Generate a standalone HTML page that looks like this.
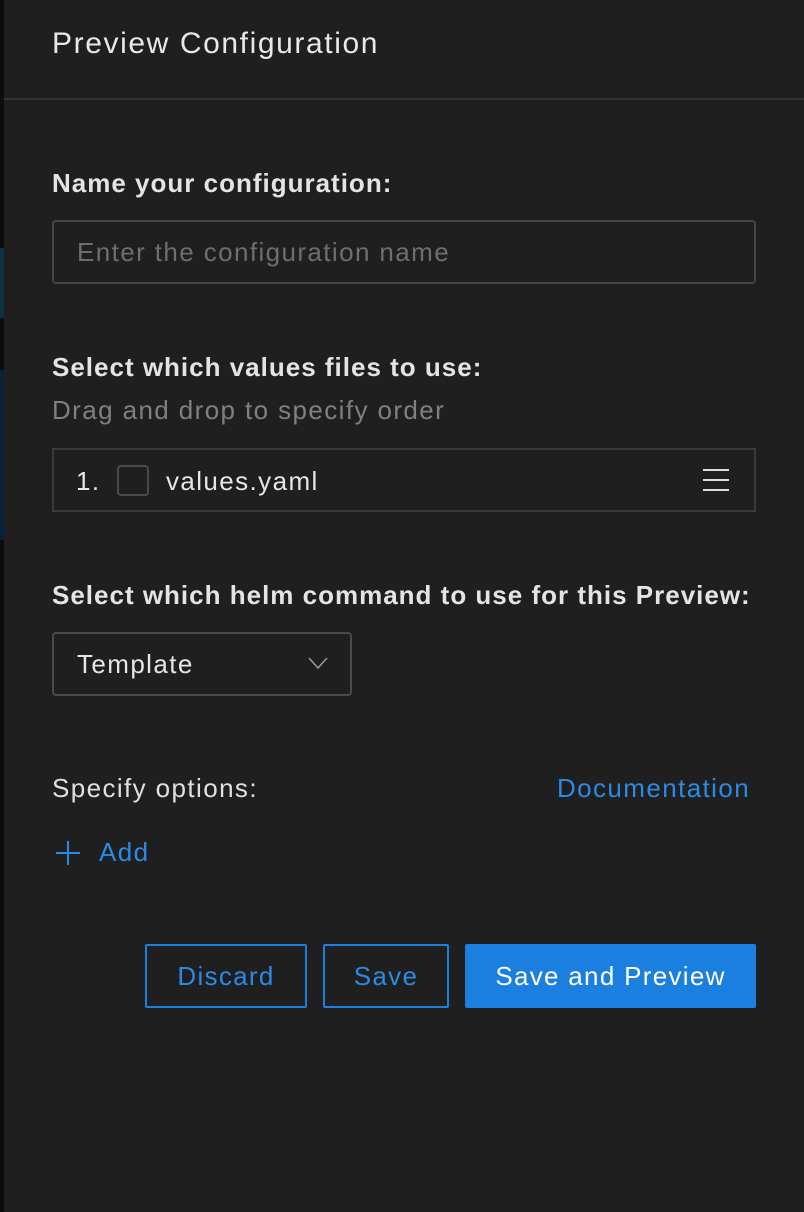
<!DOCTYPE html>
<html><head><meta charset="utf-8"><style>
*{margin:0;padding:0;box-sizing:border-box}
body{width:804px;height:1212px;background:#1f1f1f;font-family:"Liberation Sans",sans-serif;color:#e6e6e6;position:relative;overflow:hidden}
.strip{position:absolute;left:0;top:0;width:4px;height:1212px;background:#0d0d0d}
.a{position:absolute;white-space:nowrap;font-size:26px;letter-spacing:1.4px}
.lbl{font-weight:bold;font-size:26px;letter-spacing:1px;color:#e4e4e4}
.box{position:absolute;border:2px solid #444;border-radius:3px}
.btn{position:absolute;border:2px solid #1a7fdf;border-radius:2px;color:#2b8ae6;font-size:26px;letter-spacing:1.3px;display:flex;align-items:center;justify-content:center}
</style></head><body>
<div class="strip"></div>
<div style="position:absolute;left:0;top:248px;width:4px;height:70px;background:#0b3340"></div>
<div style="position:absolute;left:0;top:370px;width:4px;height:170px;background:#0a2038"></div>
<div class="a" style="left:52px;top:27px;font-size:30px;letter-spacing:1.6px;color:#e8e8e8">Preview Configuration</div>
<div style="position:absolute;left:4px;top:98px;width:800px;height:2px;background:#333"></div>
<div class="a lbl" style="left:52px;top:168px">Name your configuration:</div>
<div class="box" style="left:52px;top:220px;width:704px;height:64px;border-radius:4px"></div>
<div class="a" style="left:77px;top:237px;color:#6e6e6e">Enter the configuration name</div>
<div class="a lbl" style="left:52px;top:352px">Select which values files to use:</div>
<div class="a" style="left:52px;top:395px;color:#808080">Drag and drop to specify order</div>
<div class="box" style="left:52px;top:448px;width:704px;height:64px;border-radius:0;border-color:#3a3a3a"></div>
<div class="a" style="left:76px;top:466px">1.</div>
<div class="box" style="left:117px;top:465px;width:32px;height:31px;border-radius:4px;border-color:#4a4a4a"></div>
<div class="a" style="left:166px;top:466px">values.yaml</div>
<svg style="position:absolute;left:703px;top:468px" width="26" height="24"><path d="M0 2H26M0 12H26M0 22H26" stroke="#ddd" stroke-width="2"/></svg>
<div class="a lbl" style="left:52px;top:580px">Select which helm command to use for this Preview:</div>
<div class="box" style="left:52px;top:632px;width:300px;height:64px;border-radius:4px;border-color:#4a4a4a"></div>
<div class="a" style="left:77px;top:649px">Template</div>
<svg style="position:absolute;left:308px;top:657px" width="20" height="12"><path d="M1 1L10 11L19 1" fill="none" stroke="#999" stroke-width="1.5"/></svg>
<div class="a" style="left:52px;top:773px;color:#e0e0e0">Specify options:</div>
<div class="a" style="left:557px;top:773px;color:#2b8ae6">Documentation</div>
<svg style="position:absolute;left:56px;top:841px" width="24" height="24"><path d="M12 0V24M0 12H24" stroke="#2b8ae6" stroke-width="2"/></svg>
<div class="a" style="left:99px;top:837px;color:#2b8ae6">Add</div>
<div class="btn" style="left:145px;top:944px;width:162px;height:64px">Discard</div>
<div class="btn" style="left:323px;top:944px;width:126px;height:64px">Save</div>
<div class="btn" style="left:465px;top:944px;width:291px;height:64px;background:#1a7fdf;color:#fff">Save and Preview</div>
</body></html>
